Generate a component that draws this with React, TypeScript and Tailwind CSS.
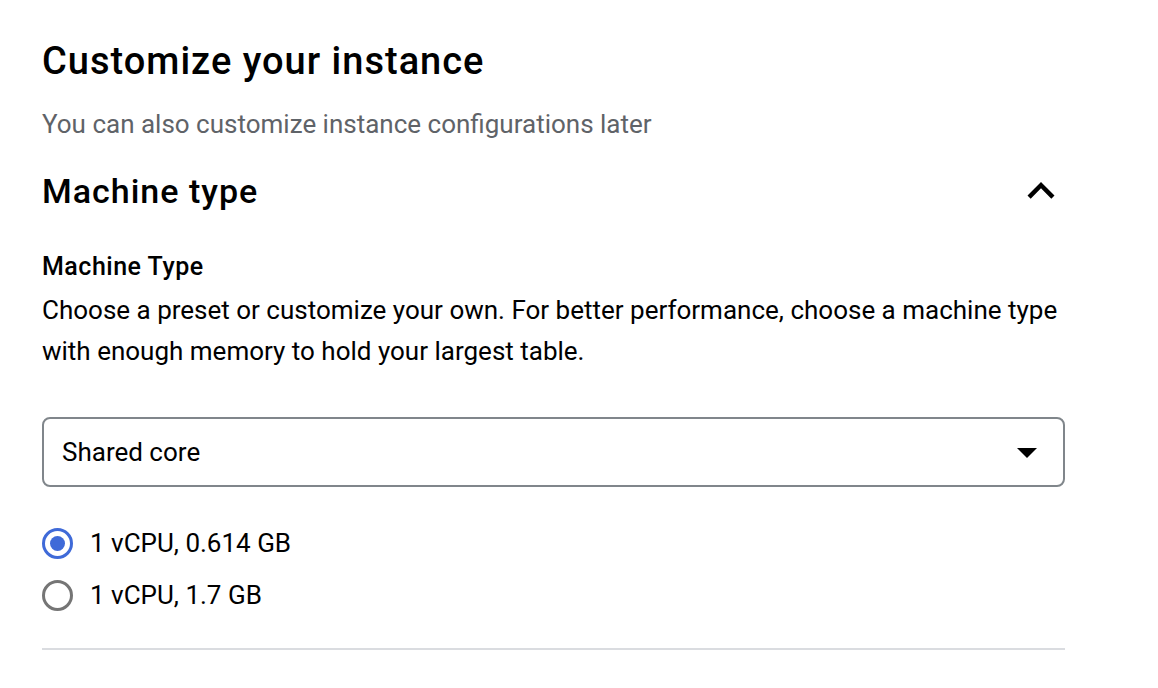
import { useState } from "react";

const options = ["1 vCPU, 0.614 GB", "1 vCPU, 1.7 GB"];

const Radio = ({ checked }: { checked: boolean }) => (
  <span
    className={`flex h-[31px] w-[31px] shrink-0 items-center justify-center rounded-full border-[3px] ${
      checked ? "border-[#3f6ad8]" : "border-[#757575]"
    }`}
  >
    {checked && <span className="h-[15px] w-[15px] rounded-full bg-[#3f6ad8]" />}
  </span>
);

export default function App() {
  const [selected, setSelected] = useState(0);

  return (
    <div className="min-h-[688px] bg-white font-['Roboto',sans-serif] text-[#202124]">
      <div className="ml-[42px] w-[1023px] pt-[36px]">
        <h1 className="text-[38px] leading-[50px] font-medium tracking-[1px] text-black">
          Customize your instance
        </h1>
        <p className="mt-[23px] text-[26px] leading-[30px] text-[#5f6368]">
          You can also customize instance configurations later
        </p>

        {/* Section header */}
        <div className="mt-[25px] flex h-[54px] items-center justify-between">
          <h2 className="text-[34px] leading-[44px] font-medium tracking-[1px] text-black">
            Machine type
          </h2>
          <svg width="54" height="54" viewBox="0 0 24 24" className="-mr-[3px]">
            <path d="M12 8l-6 6 1.41 1.41L12 10.83l4.59 4.58L18 14z" fill="#000" />
          </svg>
        </div>

        <div className="mt-[33px] text-[25px] leading-[32px] font-medium tracking-[0.5px] text-black">
          Machine Type
        </div>
        <p className="mt-[7px] text-[26px] leading-[41px] text-black">
          Choose a preset or customize your own. For better performance, choose a machine type
          with enough memory to hold your largest table.
        </p>

        {/* Select */}
        <div className="mt-[45px] flex h-[70px] items-center justify-between rounded-[8px] border-2 border-[#80868b] pl-[18px] pr-[12px]">
          <span className="text-[26px] text-black">Shared core</span>
          <svg width="48" height="48" viewBox="0 0 24 24">
            <path d="M7 10l5 5 5-5z" fill="#000" />
          </svg>
        </div>

        {/* Radios */}
        <div className="mt-[41px] flex flex-col gap-[21px]">
          {options.map((o, i) => (
            <label
              key={o}
              onClick={() => setSelected(i)}
              className="flex h-[31px] cursor-pointer items-center gap-[17px]"
            >
              <Radio checked={selected === i} />
              <span className="text-[26px] text-black">{o}</span>
            </label>
          ))}
        </div>

        <div className="mt-[37px] h-[2px] bg-[#dadce0]" />
      </div>
    </div>
  );
}
